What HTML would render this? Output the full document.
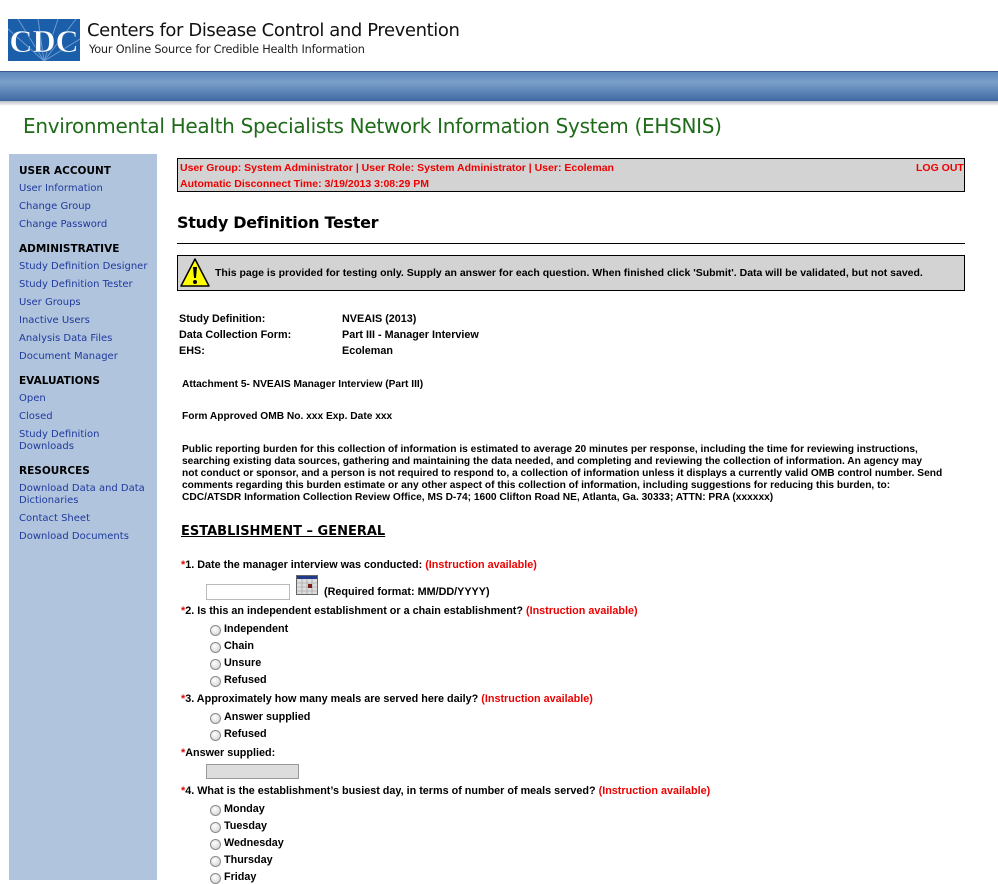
<!DOCTYPE html>
<html><head><meta charset="utf-8"><style>
*{margin:0;padding:0;box-sizing:border-box}
body{width:998px;height:880px;overflow:hidden;background:#fff;font-family:"DejaVu Sans",sans-serif;position:relative}
.a{position:absolute;white-space:nowrap}
.b{font-family:"Liberation Sans",sans-serif;font-weight:bold;font-size:10.5px;color:#000}
.q{font-size:10.8px}
.side{position:absolute;left:9px;top:154px;width:148px;height:726px;background:#b0c4de}
.side div{position:absolute;left:10px;font-size:10px;color:#1f3a9c;white-space:nowrap;line-height:12px}
.side .h{font-weight:bold;color:#000;font-size:10.5px}
.r{color:#e00}
.rad{position:absolute;width:11px;height:11px;border-radius:50%;border:1px solid #8a8a8a;background:radial-gradient(circle at 40% 35%,#fff,#ccc)}
</style></head><body>
<svg class="a" style="left:8px;top:19px" width="72" height="42" viewBox="0 0 72 42"><rect width="72" height="42" fill="#1b5fab"/><g stroke="#6d9ad0" stroke-width="1"><line x1="36" y1="42" x2="0" y2="10"/><line x1="36" y1="42" x2="10" y2="0"/><line x1="36" y1="42" x2="30" y2="0"/><line x1="36" y1="42" x2="50" y2="0"/><line x1="36" y1="42" x2="68" y2="0"/><line x1="36" y1="42" x2="72" y2="20"/></g><text x="36" y="33" text-anchor="middle" font-family="Liberation Serif" font-weight="bold" font-size="32" fill="#fff" stroke="#1b5fab" stroke-width="0.6">CDC</text></svg>
<div class="a" style="left:87px;top:20px;font-family:'DejaVu Sans';font-size:18px;color:#111;letter-spacing:-0.4px">Centers for Disease Control and Prevention</div>
<div class="a" style="left:89px;top:43px;font-size:11.3px;color:#222;letter-spacing:-0.2px">Your Online Source for Credible Health Information</div>
<div class="a" style="left:0;top:71px;width:998px;height:30px;background:linear-gradient(#5e87bb,#7aa0c8 35%,#4a72ab 90%,#3f64a0);border-top:1px solid #3b5b8e"></div>
<div class="a" style="left:0;top:101px;width:998px;height:5px;background:linear-gradient(#b8bcc4,#fff)"></div>
<div class="a" style="left:23px;top:114px;font-size:20px;color:#1f6b1a;letter-spacing:-0.3px">Environmental Health Specialists Network Information System (EHSNIS)</div>
<div class="side">
<div class="h" style="top:11px">USER ACCOUNT</div>
<div style="top:29px">User Information</div>
<div style="top:47px">Change Group</div>
<div style="top:65px">Change Password</div>
<div class="h" style="top:89px">ADMINISTRATIVE</div>
<div style="top:107px">Study Definition Designer</div>
<div style="top:125px">Study Definition Tester</div>
<div style="top:143px">User Groups</div>
<div style="top:161px">Inactive Users</div>
<div style="top:179px">Analysis Data Files</div>
<div style="top:197px">Document Manager</div>
<div class="h" style="top:221px">EVALUATIONS</div>
<div style="top:239px">Open</div>
<div style="top:257px">Closed</div>
<div style="top:275px">Study Definition<br>Downloads</div>
<div class="h" style="top:311px">RESOURCES</div>
<div style="top:329px">Download Data and Data<br>Dictionaries</div>
<div style="top:359px">Contact Sheet</div>
<div style="top:377px">Download Documents</div>
</div>
<div class="a" style="left:177px;top:158px;width:788px;height:34px;background:#d3d3d3;border:1px solid #000"></div>
<div class="a b" style="left:180px;top:162px;color:#e00">User Group: System Administrator | User Role: System Administrator | User: Ecoleman</div>
<div class="a b" style="left:180px;top:178px;color:#e00">Automatic Disconnect Time: 3/19/2013 3:08:29 PM</div>
<div class="a b" style="left:916px;top:162px;color:#e00">LOG OUT</div>
<div class="a" style="left:177px;top:213px;font-family:'DejaVu Sans';font-weight:bold;font-size:16px;letter-spacing:-0.3px">Study Definition Tester</div>
<div class="a" style="left:177px;top:243px;width:788px;height:1px;background:#000"></div>
<div class="a" style="left:177px;top:255px;width:788px;height:36px;background:#d3d3d3;border:1px solid #000"></div>
<svg class="a" style="left:179px;top:257px" width="32" height="32" viewBox="0 0 32 32"><path d="M16 2 L30 29 L2 29 Z" fill="#ff0" stroke="#000" stroke-width="1.5" stroke-linejoin="round"/><path d="M14 10 h4 l-1 11 h-2z" fill="#000"/><circle cx="16" cy="25" r="2" fill="#000"/></svg>
<div class="a b" style="left:215px;top:267px">This page is provided for testing only. Supply an answer for each question. When finished click 'Submit'. Data will be validated, but not saved.</div>
<div class="a b q" style="left:179px;top:313px">Study Definition:</div><div class="a b q" style="left:342px;top:313px">NVEAIS (2013)</div>
<div class="a b q" style="left:179px;top:329px">Data Collection Form:</div><div class="a b q" style="left:342px;top:329px">Part III - Manager Interview</div>
<div class="a b q" style="left:179px;top:345px">EHS:</div><div class="a b q" style="left:342px;top:345px">Ecoleman</div>
<div class="a b" style="left:182px;top:379px;font-size:10.2px">Attachment 5- NVEAIS Manager Interview (Part III)</div>
<div class="a b" style="left:182px;top:411px;font-size:10.2px">Form Approved OMB No. xxx Exp. Date xxx</div>
<div class="a b" style="left:182px;top:444px;font-size:10.2px;line-height:12px">Public reporting burden for this collection of information is estimated to average 20 minutes per response, including the time for reviewing instructions,<br>searching existing data sources, gathering and maintaining the data needed, and completing and reviewing the collection of information. An agency may<br>not conduct or sponsor, and a person is not required to respond to, a collection of information unless it displays a currently valid OMB control number. Send<br>comments regarding this burden estimate or any other aspect of this collection of information, including suggestions for reducing this burden, to:<br>CDC/ATSDR Information Collection Review Office, MS D-74; 1600 Clifton Road NE, Atlanta, Ga. 30333; ATTN: PRA (xxxxxx)</div>
<div class="a" style="left:181px;top:524px;font-family:'DejaVu Sans';font-weight:bold;font-size:13px;text-decoration:underline">ESTABLISHMENT – GENERAL</div>
<div class="a b q" style="left:181px;top:559px"><span class="r">*</span>1. Date the manager interview was conducted: <span class="r">(Instruction available)</span></div>
<div class="a" style="left:206px;top:584px;width:84px;height:16px;border:1px solid #bbb;background:#fff"></div>
<svg class="a" style="left:296px;top:575px" width="22" height="20" viewBox="0 0 22 20"><rect x="0.5" y="0.5" width="21" height="19" fill="#ddd" stroke="#666"/><rect x="1" y="1" width="20" height="3" fill="#223a88"/><g stroke="#999" stroke-width="0.6"><line x1="1" y1="8" x2="21" y2="8"/><line x1="1" y1="12" x2="21" y2="12"/><line x1="1" y1="16" x2="21" y2="16"/><line x1="6" y1="4" x2="6" y2="19"/><line x1="11" y1="4" x2="11" y2="19"/><line x1="16" y1="4" x2="16" y2="19"/></g><rect x="12" y="9" width="4" height="4" fill="#7a1a1a"/></svg>
<div class="a b q" style="left:324px;top:586px">(Required format: MM/DD/YYYY)</div>
<div class="a b q" style="left:181px;top:605px"><span class="r">*</span>2. Is this an independent establishment or a chain establishment? <span class="r">(Instruction available)</span></div>
<div class="rad" style="left:210px;top:625px"></div><div class="a b q" style="left:224px;top:623px">Independent</div>
<div class="rad" style="left:210px;top:642px"></div><div class="a b q" style="left:224px;top:640px">Chain</div>
<div class="rad" style="left:210px;top:659px"></div><div class="a b q" style="left:224px;top:657px">Unsure</div>
<div class="rad" style="left:210px;top:676px"></div><div class="a b q" style="left:224px;top:674px">Refused</div>
<div class="a b q" style="left:181px;top:693px"><span class="r">*</span>3. Approximately how many meals are served here daily? <span class="r">(Instruction available)</span></div>
<div class="rad" style="left:210px;top:713px"></div><div class="a b q" style="left:224px;top:711px">Answer supplied</div>
<div class="rad" style="left:210px;top:730px"></div><div class="a b q" style="left:224px;top:728px">Refused</div>
<div class="a b q" style="left:181px;top:747px"><span class="r">*</span>Answer supplied:</div>
<div class="a" style="left:206px;top:764px;width:93px;height:15px;border:1px solid #999;background:#ddd"></div>
<div class="a b q" style="left:181px;top:785px"><span class="r">*</span>4. What is the establishment’s busiest day, in terms of number of meals served? <span class="r">(Instruction available)</span></div>
<div class="rad" style="left:210px;top:805px"></div><div class="a b q" style="left:224px;top:803px">Monday</div>
<div class="rad" style="left:210px;top:822px"></div><div class="a b q" style="left:224px;top:820px">Tuesday</div>
<div class="rad" style="left:210px;top:839px"></div><div class="a b q" style="left:224px;top:837px">Wednesday</div>
<div class="rad" style="left:210px;top:856px"></div><div class="a b q" style="left:224px;top:854px">Thursday</div>
<div class="rad" style="left:210px;top:873px"></div><div class="a b q" style="left:224px;top:871px">Friday</div>
</body></html>
